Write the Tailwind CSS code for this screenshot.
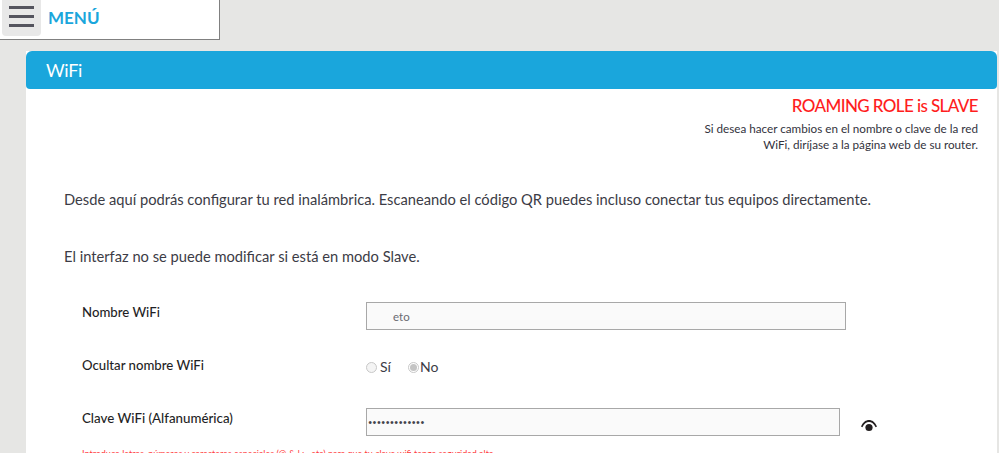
<!DOCTYPE html>
<html lang="es">
  <head>
    <meta charset="UTF-8" />
    <title>WiFi</title>
    <script src="https://cdn.jsdelivr.net/npm/@tailwindcss/browser@4"></script>
  </head>
  <body class="h-[453px] overflow-hidden bg-[#e6e6e4] font-['Lato',sans-serif] text-[#3c3c46]">
    <div class="flex h-[40px] w-[220px] border-r border-b border-[#808080] bg-white pl-[2px]">
      <button class="flex h-[36px] w-[39px] flex-col items-center justify-start gap-[6px] rounded-b-[4px] bg-[#e8e8e8] pt-[6px]">
        <span class="h-[3px] w-[25px] bg-[#54545e]"></span>
        <span class="h-[3px] w-[25px] bg-[#54545e]"></span>
        <span class="h-[3px] w-[25px] bg-[#54545e]"></span>
      </button>
      <span class="ml-[7px] pt-[6px] text-[17px] leading-[24px] font-bold text-[#1aa6dc]">MENÚ</span>
    </div>

    <div class="mt-[11px] mr-[2px] ml-[26px] h-[402px] bg-white">
      <div class="h-[38px] rounded-t-[6px] rounded-b-[4px] bg-[#1aa6dc] pl-[20px] text-[18px] leading-[38px] tracking-[-0.3px] text-white">WiFi</div>

      <div class="pr-[19px] text-right">
        <p class="mt-[6px] text-[17px] leading-[22px] font-medium tracking-[-0.6px] text-[#ff1e1e]">ROAMING ROLE is SLAVE</p>
        <p class="mt-[3px] text-[11.7px] leading-[16px] text-[#33333d]">Si desea hacer cambios en el nombre o clave de la red<br />WiFi, diríjase a la página web de su router.</p>
      </div>

      <p class="mt-[37px] ml-[38px] text-[14.7px] leading-[20px]">Desde aquí podrás configurar tu red inalámbrica. Escaneando el código QR puedes incluso conectar tus equipos directamente.</p>
      <p class="mt-[37px] ml-[38px] text-[14.7px] leading-[20px]">El interfaz no se puede modificar si está en modo Slave.</p>

      <div class="mt-[36px] ml-[56px] flex h-[28px] items-start">
        <label class="w-[284px] text-[13.2px] leading-[20px] font-medium text-[#1f1f26]">Nombre WiFi</label>
        <input type="text" value="eto" disabled class="h-[28px] w-[480px] border border-[#a8a8a8] bg-[#fafafa] pl-[26px] text-[11.5px] text-[#6a6a72]" />
      </div>

      <div class="mt-[25px] ml-[56px] flex h-[28px] items-start">
        <label class="w-[284px] text-[13.2px] leading-[20px] font-medium text-[#1f1f26]">Ocultar nombre WiFi</label>
        <div class="flex items-center pt-[2px] text-[14px] leading-[20px]">
          <span class="h-[11px] w-[11px] rounded-full border border-[#c8c8c8] bg-[#f4f4f4]"></span>
          <span class="ml-[3px]">Sí</span>
          <span class="ml-[17px] flex h-[11px] w-[11px] items-center justify-center rounded-full border border-[#c8c8c8] bg-white">
            <span class="h-[7px] w-[7px] rounded-full bg-[#c4c4c4]"></span>
          </span>
          <span class="ml-[1px]">No</span>
        </div>
      </div>

      <div class="mt-[25px] ml-[56px] flex h-[28px] items-start">
        <label class="w-[284px] text-[13.3px] leading-[20px] font-medium text-[#1f1f26]">Clave WiFi (Alfanumérica)</label>
        <input type="password" value="1234567890123" disabled class="h-[28px] w-[474px] border border-[#a8a8a8] bg-[#fafafa] pl-[1px] text-[7.5px] text-[#44444c]" />
        <svg class="mt-[11px] ml-[20px]" width="18" height="14" viewBox="0 0 18 14" fill="#231f20">
          <path d="M1 7.500C3 3 6 1 9 1s6 2 8 6.500l-1.400.7C14 4.800 11.500 3 9 3S4 4.800 2.400 8.200z" />
          <circle cx="9" cy="8.500" r="3.600" />
        </svg>
      </div>

      <p class="mt-[12px] ml-[56px] text-[9px] leading-[12px] text-[#ff3c3c]">Introduce letras, números y caracteres especiales (@ &amp; ! ; . etc) para que tu clave wifi tenga seguridad alta.</p>
    </div>
  </body>
</html>
